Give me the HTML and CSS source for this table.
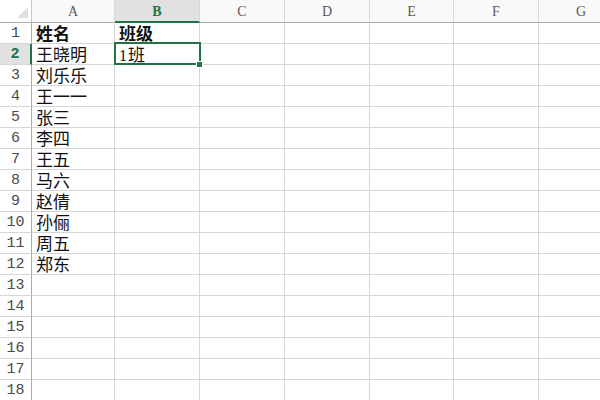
FILE: index.html
```html
<!DOCTYPE html>
<html lang="zh">
<head>
<meta charset="utf-8">
<link rel="stylesheet" href="styles.css">
</head>
<body>
<div class="sheet">
  <div class="corner"><span class="tri"></span></div>
  <div class="colhead">A</div>
  <div class="colhead active">B</div>
  <div class="colhead">C</div>
  <div class="colhead">D</div>
  <div class="colhead">E</div>
  <div class="colhead">F</div>
  <div class="colhead">G</div>

  <div class="rowhead">1</div><div class="cell bold">姓名</div><div class="cell bold">班级</div><div class="cell"></div><div class="cell"></div><div class="cell"></div><div class="cell"></div><div class="cell"></div>
  <div class="rowhead active">2</div><div class="cell">王晓明</div><div class="cell selected"><span class="num">1</span>班</div><div class="cell"></div><div class="cell"></div><div class="cell"></div><div class="cell"></div><div class="cell"></div>
  <div class="rowhead">3</div><div class="cell">刘乐乐</div><div class="cell"></div><div class="cell"></div><div class="cell"></div><div class="cell"></div><div class="cell"></div><div class="cell"></div>
  <div class="rowhead">4</div><div class="cell">王一一</div><div class="cell"></div><div class="cell"></div><div class="cell"></div><div class="cell"></div><div class="cell"></div><div class="cell"></div>
  <div class="rowhead">5</div><div class="cell">张三</div><div class="cell"></div><div class="cell"></div><div class="cell"></div><div class="cell"></div><div class="cell"></div><div class="cell"></div>
  <div class="rowhead">6</div><div class="cell">李四</div><div class="cell"></div><div class="cell"></div><div class="cell"></div><div class="cell"></div><div class="cell"></div><div class="cell"></div>
  <div class="rowhead">7</div><div class="cell">王五</div><div class="cell"></div><div class="cell"></div><div class="cell"></div><div class="cell"></div><div class="cell"></div><div class="cell"></div>
  <div class="rowhead">8</div><div class="cell">马六</div><div class="cell"></div><div class="cell"></div><div class="cell"></div><div class="cell"></div><div class="cell"></div><div class="cell"></div>
  <div class="rowhead">9</div><div class="cell">赵倩</div><div class="cell"></div><div class="cell"></div><div class="cell"></div><div class="cell"></div><div class="cell"></div><div class="cell"></div>
  <div class="rowhead">10</div><div class="cell">孙俪</div><div class="cell"></div><div class="cell"></div><div class="cell"></div><div class="cell"></div><div class="cell"></div><div class="cell"></div>
  <div class="rowhead">11</div><div class="cell">周五</div><div class="cell"></div><div class="cell"></div><div class="cell"></div><div class="cell"></div><div class="cell"></div><div class="cell"></div>
  <div class="rowhead">12</div><div class="cell">郑东</div><div class="cell"></div><div class="cell"></div><div class="cell"></div><div class="cell"></div><div class="cell"></div><div class="cell"></div>
  <div class="rowhead">13</div><div class="cell"></div><div class="cell"></div><div class="cell"></div><div class="cell"></div><div class="cell"></div><div class="cell"></div><div class="cell"></div>
  <div class="rowhead">14</div><div class="cell"></div><div class="cell"></div><div class="cell"></div><div class="cell"></div><div class="cell"></div><div class="cell"></div><div class="cell"></div>
  <div class="rowhead">15</div><div class="cell"></div><div class="cell"></div><div class="cell"></div><div class="cell"></div><div class="cell"></div><div class="cell"></div><div class="cell"></div>
  <div class="rowhead">16</div><div class="cell"></div><div class="cell"></div><div class="cell"></div><div class="cell"></div><div class="cell"></div><div class="cell"></div><div class="cell"></div>
  <div class="rowhead">17</div><div class="cell"></div><div class="cell"></div><div class="cell"></div><div class="cell"></div><div class="cell"></div><div class="cell"></div><div class="cell"></div>
  <div class="rowhead">18</div><div class="cell"></div><div class="cell"></div><div class="cell"></div><div class="cell"></div><div class="cell"></div><div class="cell"></div><div class="cell"></div>
</div>
</body>
</html>
```
FILE: styles.css
```css
html, body {
  margin: 0;
  padding: 0;
  background: #ffffff;
  overflow: hidden;
}
body {
  width: 600px;
  height: 400px;
}
.sheet {
  display: grid;
  grid-template-columns: 32px 83px 85px 85px 85px 84px 85px 85px;
  grid-template-rows: 23px repeat(18, 21px);
  width: 624px;
}
.sheet > div {
  box-sizing: border-box;
}
.corner {
  position: relative;
  background: #ffffff;
  border-right: 1px solid #c8c8c8;
  border-bottom: 1px solid #ababab;
}
.tri {
  position: absolute;
  right: 3px;
  bottom: 4px;
  width: 0;
  height: 0;
  border-left: 11px solid transparent;
  border-bottom: 11px solid #dfdfdf;
}
.colhead {
  background: #f9f9f9;
  border-right: 1px solid #d8d8d8;
  border-bottom: 1px solid #ababab;
  font-family: "Liberation Serif", serif;
  font-size: 14px;
  color: #5a5a5a;
  display: flex;
  align-items: center;
  justify-content: center;
  padding-top: 2px;
}
.colhead.active {
  background: #e1e1e1;
  border-bottom: 2px solid #217346;
  color: #217346;
  font-weight: bold;
  padding-top: 3px;
}
.rowhead {
  background: #ffffff;
  border-right: 1px solid #ababab;
  border-bottom: 1px solid #d6d6d6;
  font-family: "Liberation Mono", monospace;
  font-size: 15px;
  color: #4a4a4a;
  display: flex;
  align-items: center;
  justify-content: center;
  padding-top: 1px;
}
.rowhead.active {
  background: #e1e1e1;
  border-right: 2px solid #217346;
  color: #217346;
  font-weight: bold;
}
.cell {
  position: relative;
  border-right: 1px solid #d6d6d6;
  border-bottom: 1px solid #d6d6d6;
  font-family: "Noto Sans CJK SC", sans-serif;
  font-size: 17px;
  line-height: 20px;
  color: #111111;
  padding-left: 4px;
  white-space: nowrap;
  overflow: visible;
}
.cell.bold {
  font-weight: bold;
}
.num {
  font-family: "Liberation Serif", serif;
  font-size: 16px;
  margin-right: 1px;
}
.cell.selected::after {
  content: "";
  position: absolute;
  left: -1px;
  top: -2px;
  right: -2px;
  bottom: -1px;
  border: 2px solid #217346;
}
.cell.selected::before {
  content: "";
  position: absolute;
  right: -4px;
  bottom: -4px;
  width: 5px;
  height: 5px;
  background: #217346;
  border: 1px solid #ffffff;
  z-index: 2;
}
```
